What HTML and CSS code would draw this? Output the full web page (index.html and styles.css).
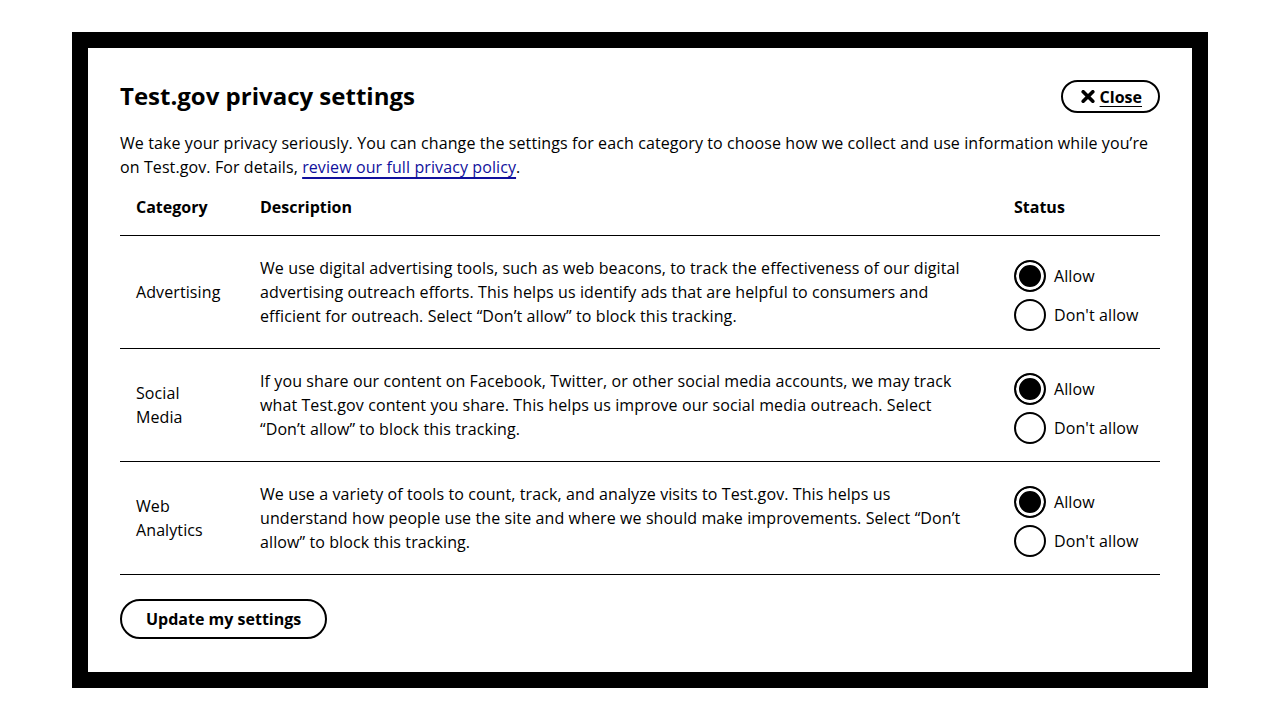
FILE: index.html
```html
<!DOCTYPE html>
<html lang="en">
<head>
<meta charset="utf-8">
<title>Test.gov privacy settings</title>
<link rel="stylesheet" href="styles.css">
</head>
<body>
<div class="dialog" role="dialog" aria-labelledby="dlg-title">
  <div class="dialog-header">
    <h2 class="dialog-title" id="dlg-title">Test.gov privacy settings</h2>
    <button class="close-btn" type="button">
      <svg class="close-icon" width="14" height="13" viewBox="0 0 14 13" aria-hidden="true">
        <path d="M2.2 1.7 L11.8 11.3 M11.8 1.7 L2.2 11.3" stroke="#000" stroke-width="3.6" stroke-linecap="round"/>
      </svg>
      <span class="close-text">Close</span>
    </button>
  </div>
  <p class="intro">We take your privacy seriously. You can change the settings for each category to choose how we collect and use information while you’re on Test.gov. For details, <a href="#" class="link">review our full privacy policy</a>.</p>
  <table class="settings">
    <colgroup>
      <col class="col-cat">
      <col class="col-desc">
      <col class="col-status">
    </colgroup>
    <thead>
      <tr>
        <th>Category</th>
        <th>Description</th>
        <th>Status</th>
      </tr>
    </thead>
    <tbody>
      <tr>
        <td class="cat">Advertising</td>
        <td class="desc">We use digital advertising tools, such as web beacons, to track the effectiveness of our digital advertising outreach efforts. This helps us identify ads that are helpful to consumers and efficient for outreach. Select “Don’t allow” to block this tracking.</td>
        <td class="status">
          <label class="radio"><input type="radio" name="adv" checked><span>Allow</span></label>
          <label class="radio"><input type="radio" name="adv"><span>Don't allow</span></label>
        </td>
      </tr>
      <tr>
        <td class="cat">Social Media</td>
        <td class="desc">If you share our content on Facebook, Twitter, or other social media accounts, we may track what Test.gov content you share. This helps us improve our social media outreach. Select “Don’t allow” to block this tracking.</td>
        <td class="status">
          <label class="radio"><input type="radio" name="soc" checked><span>Allow</span></label>
          <label class="radio"><input type="radio" name="soc"><span>Don't allow</span></label>
        </td>
      </tr>
      <tr>
        <td class="cat">Web Analytics</td>
        <td class="desc">We use a variety of tools to count, track, and analyze visits to Test.gov. This helps us understand how people use the site and where we should make improvements. Select “Don’t allow” to block this tracking.</td>
        <td class="status">
          <label class="radio"><input type="radio" name="web" checked><span>Allow</span></label>
          <label class="radio"><input type="radio" name="web"><span>Don't allow</span></label>
        </td>
      </tr>
    </tbody>
  </table>
  <button class="update-btn" type="button">Update my settings</button>
</div>
</body>
</html>
```
FILE: styles.css
```css
* { box-sizing: border-box; }

html, body {
  margin: 0;
  background: #fff;
}

body {
  font-family: "Open Sans", "Liberation Sans", sans-serif;
  font-size: 16px;
  line-height: 24px;
  color: #000;
}

.dialog {
  width: 1136px;
  margin: 32px auto 0;
  border: 16px solid #000;
  background: #fff;
  padding: 32px 32px 33px;
}

.dialog-header {
  display: flex;
  justify-content: space-between;
  align-items: flex-start;
}

.dialog-title {
  margin: 0;
  font-size: 24px;
  line-height: 32px;
  font-weight: 700;
}

.close-btn {
  display: flex;
  align-items: center;
  gap: 5px;
  height: 33px;
  padding: 0 16px 0 18px;
  border: 2px solid #000;
  border-radius: 999px;
  background: #fff;
  font-family: inherit;
  font-size: 16px;
  font-weight: 700;
  line-height: 24px;
  color: #000;
  cursor: pointer;
}

.close-icon { display: block; }

.close-text {
  text-decoration: underline;
  text-underline-offset: 3px;
}

.intro {
  margin: 18px 0 0;
  letter-spacing: 0.1px;
}

.link {
  color: #10109c;
  text-decoration: underline;
  text-decoration-thickness: 2px;
  text-underline-offset: 4px;
}

.settings {
  width: 100%;
  border-collapse: collapse;
  table-layout: fixed;
}

.col-cat { width: 124px; }
.col-status { width: 162px; }

.settings th {
  text-align: left;
  font-weight: 700;
  padding: 16px;
  border-bottom: 1px solid #000;
}

.settings td {
  padding: 20px 16px;
  border-bottom: 1px solid #000;
  vertical-align: middle;
  letter-spacing: 0.1px;
}

.settings td.desc {
  padding-right: 30px;
}

.settings td.status {
  vertical-align: top;
  padding-top: 24px;
  padding-bottom: 0;
}

.radio {
  display: flex;
  align-items: center;
  gap: 8px;
  height: 32px;
  cursor: pointer;
}

.radio + .radio { margin-top: 7px; }

.radio input {
  appearance: none;
  -webkit-appearance: none;
  margin: 0;
  width: 32px;
  height: 32px;
  flex: none;
  border: 2px solid #000;
  border-radius: 50%;
  background: #fff;
}

.radio input:checked {
  background: #000;
  box-shadow: inset 0 0 0 3px #fff;
}

.update-btn {
  display: block;
  margin-top: 24px;
  height: 40px;
  padding: 0 24px;
  border: 2px solid #000;
  border-radius: 999px;
  background: #fff;
  font-family: inherit;
  font-size: 16px;
  font-weight: 700;
  line-height: 24px;
  color: #000;
  cursor: pointer;
}
```
